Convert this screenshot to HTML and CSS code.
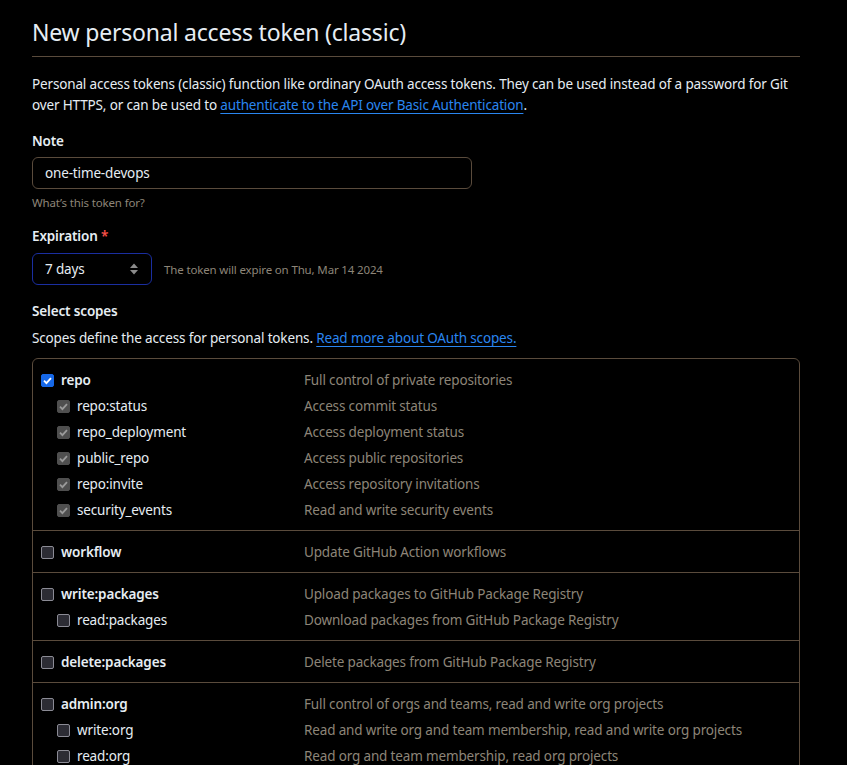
FILE: index.html
```html
<!DOCTYPE html>
<html>
<head>
<meta charset="utf-8">
<link rel="stylesheet" href="styles.css">
</head>
<body>
<div class="page">
  <h1 class="title">New personal access token (classic)</h1>
  <p class="intro">Personal access tokens (classic) function like ordinary OAuth access tokens. They can be used instead of a password for Git over HTTPS, or can be used to <a href="#">authenticate to the API over Basic Authentication</a>.</p>

  <div class="field">
    <label class="label">Note</label>
    <div class="input">one-time-devops</div>
    <div class="hint">What’s this token for?</div>
  </div>

  <div class="field field-exp">
    <label class="label">Expiration <span class="req">*</span></label>
    <div class="exp-row">
      <div class="select">7 days
        <svg class="sel-arrow" width="10" height="14" viewBox="0 0 10 14"><path d="M1 6 L5 1.5 L9 6 Z M1 8 L5 12.5 L9 8 Z" fill="#8b8b8b"/></svg>
      </div>
      <span class="exp-note">The token will expire on Thu, Mar 14 2024</span>
    </div>
  </div>

  <div class="scopes-head">
    <div class="label">Select scopes</div>
    <p class="scopes-desc">Scopes define the access for personal tokens. <a href="#">Read more about OAuth scopes.</a></p>
  </div>

  <div class="scopes">
    <div class="group">
      <div class="row top"><span class="name"><span class="cb checked"><svg width="11" height="11" viewBox="0 0 12 12"><path d="M2.2 6.2 L4.8 8.8 L9.8 3.4" stroke="#fff" stroke-width="2" fill="none"/></svg></span>repo</span><span class="desc">Full control of private repositories</span></div>
      <div class="row sub"><span class="name"><span class="cb disabled"><svg width="11" height="11" viewBox="0 0 12 12"><path d="M2.2 6.2 L4.8 8.8 L9.8 3.4" stroke="#9a9a9a" stroke-width="2" fill="none"/></svg></span>repo:status</span><span class="desc">Access commit status</span></div>
      <div class="row sub"><span class="name"><span class="cb disabled"><svg width="11" height="11" viewBox="0 0 12 12"><path d="M2.2 6.2 L4.8 8.8 L9.8 3.4" stroke="#9a9a9a" stroke-width="2" fill="none"/></svg></span>repo_deployment</span><span class="desc">Access deployment status</span></div>
      <div class="row sub"><span class="name"><span class="cb disabled"><svg width="11" height="11" viewBox="0 0 12 12"><path d="M2.2 6.2 L4.8 8.8 L9.8 3.4" stroke="#9a9a9a" stroke-width="2" fill="none"/></svg></span>public_repo</span><span class="desc">Access public repositories</span></div>
      <div class="row sub"><span class="name"><span class="cb disabled"><svg width="11" height="11" viewBox="0 0 12 12"><path d="M2.2 6.2 L4.8 8.8 L9.8 3.4" stroke="#9a9a9a" stroke-width="2" fill="none"/></svg></span>repo:invite</span><span class="desc">Access repository invitations</span></div>
      <div class="row sub"><span class="name"><span class="cb disabled"><svg width="11" height="11" viewBox="0 0 12 12"><path d="M2.2 6.2 L4.8 8.8 L9.8 3.4" stroke="#9a9a9a" stroke-width="2" fill="none"/></svg></span>security_events</span><span class="desc">Read and write security events</span></div>
    </div>
    <div class="group">
      <div class="row top"><span class="name"><span class="cb"></span>workflow</span><span class="desc">Update GitHub Action workflows</span></div>
    </div>
    <div class="group">
      <div class="row top"><span class="name"><span class="cb"></span>write:packages</span><span class="desc">Upload packages to GitHub Package Registry</span></div>
      <div class="row sub"><span class="name"><span class="cb"></span>read:packages</span><span class="desc">Download packages from GitHub Package Registry</span></div>
    </div>
    <div class="group">
      <div class="row top"><span class="name"><span class="cb"></span>delete:packages</span><span class="desc">Delete packages from GitHub Package Registry</span></div>
    </div>
    <div class="group">
      <div class="row top"><span class="name"><span class="cb"></span>admin:org</span><span class="desc">Full control of orgs and teams, read and write org projects</span></div>
      <div class="row sub"><span class="name"><span class="cb"></span>write:org</span><span class="desc">Read and write org and team membership, read and write org projects</span></div>
      <div class="row sub"><span class="name"><span class="cb"></span>read:org</span><span class="desc">Read org and team membership, read org projects</span></div>
    </div>
  </div>
</div>
</body>
</html>
```
FILE: styles.css
```css
html, body {
  margin: 0;
  padding: 0;
  background: #000;
  overflow: hidden;
}
body {
  font-family: "Noto Sans", "Open Sans", sans-serif;
  font-size: 13.5px;
  letter-spacing: -0.15px;
  color: #e6edf3;
}
.page {
  width: 768px;
  margin-left: 32px;
  padding-top: 16px;
}
.title {
  margin: 0;
  font-size: 23px;
  letter-spacing: -0.2px;
  font-weight: 400;
  line-height: 32px;
  padding-bottom: 8px;
  border-bottom: 1px solid #5a4b3c;
  color: #e6edf3;
}
a {
  color: #2a86f0;
  text-decoration: underline;
  text-underline-offset: 3px;
}
.intro {
  margin: 17px 0 0;
  line-height: 21px;
}
.field {
  margin-top: 15px;
}
.field-exp {
  margin-top: 14px;
}
.label {
  display: block;
  font-weight: 600;
  line-height: 21px;
}
.req {
  color: #f85149;
}
.input {
  margin-top: 5px;
  width: 440px;
  height: 32px;
  box-sizing: border-box;
  border: 1px solid #5a4b3c;
  border-radius: 6px;
  padding: 0 12px;
  line-height: 30px;
}
.hint {
  margin-top: 5px;
  font-size: 11.5px;
  line-height: 18px;
  color: #8d8578;
}
.exp-row {
  margin-top: 6px;
  display: flex;
  align-items: center;
  gap: 12px;
}
.select {
  width: 120px;
  height: 32px;
  box-sizing: border-box;
  border: 1px solid #1a2ea0;
  border-radius: 6px;
  padding: 0 12px;
  line-height: 30px;
  display: flex;
  justify-content: space-between;
  align-items: center;
}
.exp-note {
  font-size: 11.5px;
  color: #8d8578;
}
.scopes-head {
  margin-top: 16px;
}
.scopes-desc {
  margin: 6px 0 0;
  line-height: 21px;
}
.scopes {
  margin-top: 9px;
  border: 1px solid #5a4b3c;
  border-radius: 6px;
}
.group {
  padding: 8px 8px 7px;
  border-top: 1px solid #5a4b3c;
}
.group:first-child {
  border-top: none;
}
.row {
  display: flex;
  height: 26px;
  align-items: center;
}
.name {
  width: 263px;
  display: flex;
  align-items: center;
  flex-shrink: 0;
}
.row.top .name {
  font-weight: 600;
}
.row.sub .name {
  padding-left: 16px;
  width: 247px;
}
.desc {
  color: #8d8578;
}
.cb {
  width: 13px;
  height: 13px;
  box-sizing: border-box;
  border: 1.5px solid #8b8b95;
  background: #2c2c34;
  border-radius: 2px;
  margin-right: 7px;
  display: inline-flex;
  align-items: center;
  justify-content: center;
}
.cb.checked {
  background: #1668e8;
  border-color: #1668e8;
}
.cb.disabled {
  background: #4f4f4f;
  border-color: #4f4f4f;
}
```
